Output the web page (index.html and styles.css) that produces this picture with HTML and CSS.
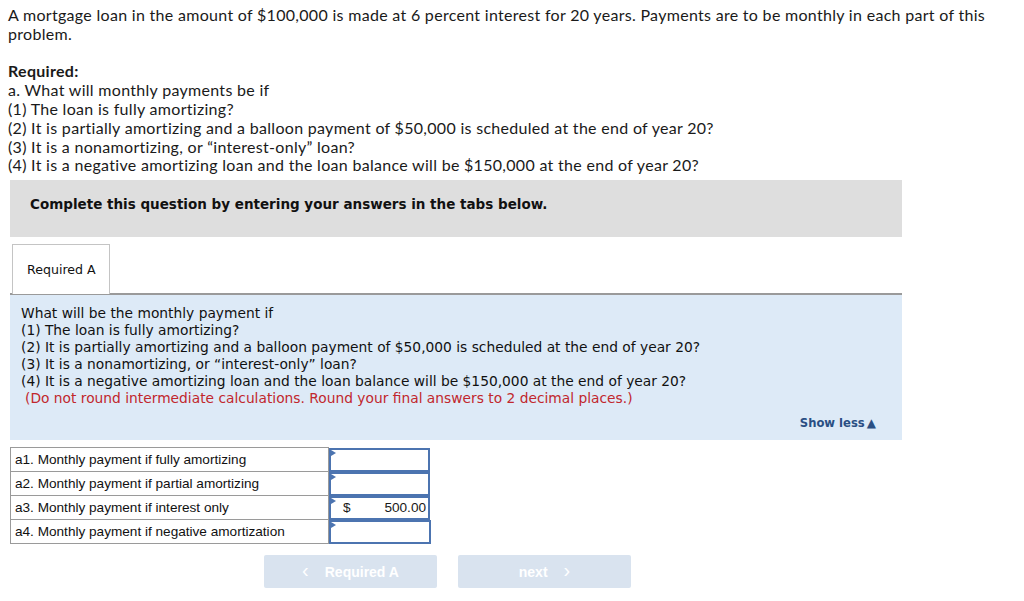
FILE: index.html
```html
<!DOCTYPE html>
<html>
<head>
<meta charset="utf-8">
<link rel="stylesheet" href="styles.css">
</head>
<body>
<div class="intro">
  <p class="lead">A mortgage loan in the amount of $100,000 is made at 6 percent interest for 20 years. Payments are to be monthly in each part of this problem.</p>
  <p class="req"><b>Required:</b><br>a. What will monthly payments be if<br>(1) The loan is fully amortizing?<br>(2) It is partially amortizing and a balloon payment of $50,000 is scheduled at the end of year 20?<br>(3) It is a nonamortizing, or “interest-only” loan?<br>(4) It is a negative amortizing loan and the loan balance will be $150,000 at the end of year 20?</p>
</div>
<div class="banner">Complete this question by entering your answers in the tabs below.</div>
<div class="tabs"><div class="tab">Required A</div></div>
<div class="panel">
  <p class="ptext">What will be the monthly payment if<br>(1) The loan is fully amortizing?<br>(2) It is partially amortizing and a balloon payment of $50,000 is scheduled at the end of year 20?<br>(3) It is a nonamortizing, or “interest-only” loan?<br>(4) It is a negative amortizing loan and the loan balance will be $150,000 at the end of year 20?<br><span class="note">(Do not round intermediate calculations. Round your final answers to 2 decimal places.)</span></p>
  <div class="showless">Show less<span class="tri">▲</span></div>
</div>
<table class="answers">
  <tr><td class="lbl">a1. Monthly payment if fully amortizing</td><td class="inp"><div class="box"></div></td></tr>
  <tr><td class="lbl">a2. Monthly payment if partial amortizing</td><td class="inp"><div class="box"></div></td></tr>
  <tr><td class="lbl">a3. Monthly payment if interest only</td><td class="inp"><div class="box"><span class="cur">$</span><span class="val">500.00</span></div></td></tr>
  <tr><td class="lbl">a4. Monthly payment if negative amortization</td><td class="inp"><div class="box"></div></td></tr>
</table>
<div class="nav">
  <div class="btn"><span class="chev">&lsaquo;</span>Required A</div>
  <div class="btn">next<span class="chev r">&rsaquo;</span></div>
</div>
</body>
</html>
```
FILE: styles.css
```css
body {
  margin: 0;
  background: #fff;
  font-family: "Lato", "Liberation Sans", sans-serif;
  color: #1a1a1a;
}
.intro {
  padding: 6px 8px 0;
  max-width: 1000px;
  font-size: 16px;
  letter-spacing: 0.3px;
  line-height: 18.8px;
}
.intro p { margin: 0; }
.lead { margin-bottom: 18.8px !important; }
.req b { font-weight: 700; }
.banner {
  margin: 5px 122px 0 10px;
  height: 57px;
  background: #dedede;
  box-sizing: border-box;
  padding: 16px 0 0 20px;
  font-family: "DejaVu Sans", Verdana, sans-serif;
  font-weight: 700;
  font-size: 13.5px;
  color: #111;
}
.tabs {
  margin: 7px 122px 0 10px;
  border-bottom: 2px solid #9a9a9a;
  display: flex;
  height: 49px;
}
.tab {
  margin-left: 2px;
  width: 98px;
  height: 50px;
  box-sizing: border-box;
  border: 1px solid #c4c4c4;
  border-bottom: none;
  background: #fff;
  font-family: "DejaVu Sans", Verdana, sans-serif;
  font-size: 12.6px;
  padding: 17px 0 0 14px;
  color: #111;
}
.panel {
  margin: 0 122px 0 10px;
  background: #ddeaf7;
  height: 145px;
  box-sizing: border-box;
  padding: 10px 0 0 11px;
  font-family: "DejaVu Sans", Verdana, sans-serif;
  font-size: 13.8px;
  line-height: 17px;
  color: #111;
  display: flex;
  flex-direction: column;
}
.ptext { margin: 0; }
.note { color: #c1272d; padding-left: 4px; }
.showless {
  align-self: flex-end;
  margin: auto 26px 8px 0;
  font-family: "DejaVu Sans", Verdana, sans-serif;
  font-weight: 700;
  font-size: 11.6px;
  color: #2a4f83;
  display: flex;
  align-items: center;
}
.tri { font-size: 12px; margin-left: 2px; }
.answers {
  margin: 7px 0 0 10px;
  border-collapse: collapse;
  font-family: "Liberation Sans", Arial, sans-serif;
  font-size: 13.6px;
}
.answers td {
  height: 24px;
  padding: 0;
  box-sizing: border-box;
}
.lbl {
  width: 318px;
  border: 1px solid #9a9a9a;
  padding-left: 4px !important;
  color: #111;
}
.inp { width: 102px; padding: 0 !important; }
.box {
  position: relative;
  height: 24px;
  box-sizing: border-box;
  border: 2px solid #4c74b0;
  display: flex;
  align-items: center;
  justify-content: space-between;
  padding: 0 2px 0 12px;
}
.box::before {
  content: "";
  position: absolute;
  left: 0;
  top: 0;
  border-left: 5px solid #4c74b0;
  border-top: 3px solid transparent;
  border-bottom: 3px solid transparent;
}
.nav {
  display: flex;
  gap: 21px;
  margin: 11px 0 0 264px;
}
.btn {
  width: 173px;
  height: 33px;
  background: #d9e3ef;
  border-radius: 2px;
  color: #fff;
  font-family: "Liberation Sans", Arial, sans-serif;
  font-weight: 700;
  font-size: 14px;
  display: flex;
  align-items: center;
  justify-content: center;
}
.chev { font-size: 20px; font-weight: 400; margin-right: 16px; margin-top: -3px; }
.chev.r { margin-right: 0; margin-left: 16px; }
```
